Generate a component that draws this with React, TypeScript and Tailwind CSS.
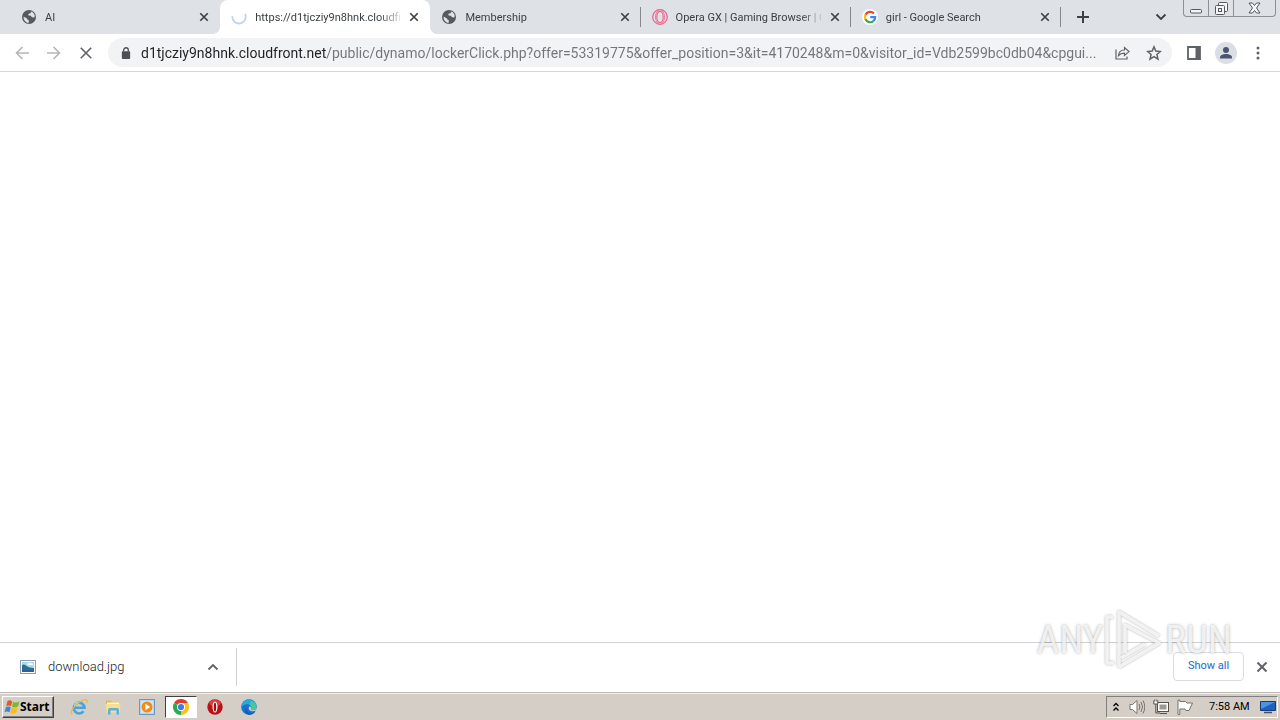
import type { ReactNode } from "react";

const globe = (
  <svg viewBox="0 0 16 16" className="size-4 shrink-0">
    <circle cx="8" cy="8" r="7" fill="#565a60" />
    <path d="M2.600 7.500 6 9.400l.6 1.400 1.300.5-.4 2.900A6 6 0 0 1 2.600 7.500ZM7.200 2.200l3.200.2-.7 1.500-2 .8-.6 1.500 2.700.5 1.200 1.600 2.300.1.500-1.400-.6-2-2-2.200Z" fill="#dee1e6" />
  </svg>
);

const spinner = (
  <svg viewBox="0 0 16 16" className="size-4 shrink-0" fill="none">
    <path d="M1.300 8a6.700 6.700 0 1 0 13-2.500" stroke="#c3d0f2" strokeWidth="1.800" strokeLinecap="round" />
  </svg>
);

const operaGx = (
  <svg viewBox="0 0 16 16" className="size-4 shrink-0" fill="none" stroke="#ef5f88">
    <circle cx="8" cy="8" r="7.300" strokeWidth="1.200" />
    <ellipse cx="8" cy="8" rx="3.200" ry="5.600" strokeWidth="1.100" />
    <path d="M6.500 1.500C2.500 4 2.500 12 6.500 14.500M9.500 1.500c4 2.500 4 10.500 0 13" strokeWidth=".8" />
  </svg>
);

const google = (
  <svg viewBox="0 0 16 16" className="size-4 shrink-0">
    <circle cx="8" cy="8" r="8" fill="#fff" />
    <g fill="none" strokeWidth="2.200">
      <path d="M11.900 4.400A5.200 5.200 0 0 0 3.500 5.700" stroke="#ea4335" />
      <path d="M3.500 5.600a5.200 5.200 0 0 0 0 4.800" stroke="#fbbc05" />
      <path d="M3.500 10.300a5.200 5.200 0 0 0 7.900 1.800" stroke="#34a853" />
      <path d="M8.200 8.100h5a5.200 5.200 0 0 1-1.900 4.100" stroke="#4285f4" />
    </g>
  </svg>
);

function Cross({ className }: { className: string }) {
  return (
    <svg viewBox="0 0 12 12" className={className} fill="none" stroke="currentColor">
      <path d="M1.500 1.500l9 9M10.500 1.500l-9 9" />
    </svg>
  );
}

type TabInfo = { title: string; icon: ReactNode; active?: boolean; line?: boolean };

const tabs: TabInfo[] = [
  { title: "AI", icon: globe },
  { title: "https://d1tjcziy9n8hnk.cloudfront.net", icon: spinner, active: true },
  { title: "Membership", icon: globe, line: true },
  { title: "Opera GX | Gaming Browser | Opera", icon: operaGx, line: true },
  { title: "girl - Google Search", icon: google, line: true },
];

function Tab({ title, icon, active, line }: TabInfo) {
  const shape = active
    ? "relative rounded-t-lg bg-white before:absolute before:bottom-0 before:-left-2 before:size-2 before:bg-[radial-gradient(circle_at_0_0,#dee1e6_8px,#fff_8px)] after:absolute after:bottom-0 after:-right-2 after:size-2 after:bg-[radial-gradient(circle_at_100%_0,#dee1e6_8px,#fff_8px)]"
    : "";
  return (
    <div className={`flex h-full min-w-0 flex-1 items-center pl-[11px] ${shape}`}>
      {icon}
      <button
        role="tab"
        aria-selected={!!active}
        className="ml-2 min-w-0 flex-1 overflow-hidden pt-px text-left text-[11px] leading-4 whitespace-nowrap text-[#3c4043] [mask-image:linear-gradient(to_right,#000_124px,transparent_150px)]"
      >
        {title}
      </button>
      <button aria-label={`Close ${title}`} className="flex w-6 shrink-0 justify-center pl-1 text-[#3c4043]">
        <Cross className="size-2.5 stroke-2" />
      </button>
      <span className={`ml-[5px] h-5 w-px shrink-0 ${line ? "bg-[#85888d]" : ""}`} />
    </div>
  );
}

function ToolButton({ label, children }: { label: string; children: ReactNode }) {
  return (
    <button aria-label={label} className="flex h-8 w-8 shrink-0 items-center justify-center text-[#5f6368]">
      {children}
    </button>
  );
}

function TabStrip() {
  return (
    <header className="flex h-[34px] items-center bg-[#dee1e6] pl-2.5">
      <div role="tablist" className="flex h-full min-w-0 flex-[0_1_1051px]">
        {tabs.map((t) => (
          <Tab key={t.title} {...t} />
        ))}
      </div>
      <button aria-label="New tab" className="flex h-8 w-11 shrink-0 items-center justify-center text-[#3c4043]">
        <svg viewBox="0 0 12 12" className="size-3" stroke="currentColor" strokeWidth="2">
          <path d="M6 0v12M0 6h12" />
        </svg>
      </button>
      <button aria-label="Search tabs" className="mr-2 ml-auto flex h-8 w-7 shrink-0 items-center justify-center text-[#3c4043]">
        <svg viewBox="0 0 12 8" className="h-2 w-3" fill="none" stroke="currentColor" strokeWidth="1.800">
          <path d="M1.500 1.500 6 6l4.500-4.500" />
        </svg>
      </button>
      <div className="mr-1 flex h-[17px] shrink-0 self-start divide-x divide-[#8b8f96] rounded-b border border-t-0 border-[#8b8f96] text-[#55595f]">
        <button aria-label="Minimize" className="flex w-[25px] items-center justify-center">
          <svg viewBox="0 0 12 12" className="mt-1 size-3" fill="#f4f5f7" stroke="currentColor">
            <rect x=".5" y="5.500" width="11" height="3.500" rx="1" />
          </svg>
        </button>
        <button aria-label="Restore" className="flex w-[25px] items-center justify-center">
          <svg viewBox="0 0 13 13" className="size-[13px]" fill="#f4f5f7" stroke="currentColor">
            <rect x="3.500" y=".5" width="9" height="9" rx="1" />
            <rect x=".5" y="3.500" width="9" height="9" rx="1" />
            <rect x="3.500" y="6.500" width="3" height="3" />
          </svg>
        </button>
        <button aria-label="Close" className="flex w-[41px] items-center justify-center">
          <svg viewBox="0 0 13 12" className="h-3 w-[13px]" fill="#f4f5f7" stroke="currentColor">
            <path d="M1 1h3.500l2 2.500L8.500 1H12L8.500 6l3.500 5H8.500l-2-2.500-2 2.500H1l3.500-5Z" />
          </svg>
        </button>
      </div>
    </header>
  );
}

function Toolbar() {
  return (
    <nav className="flex h-[38px] items-center border-b border-[#d5d7da] bg-white px-1.5">
      <ToolButton label="Back">
        <svg viewBox="0 0 14 14" className="size-3.5 text-[#b4b6b9]" fill="none" stroke="currentColor" strokeWidth="1.600">
          <path d="M14 7H1.500M7.500 1 1.500 7l6 6" />
        </svg>
      </ToolButton>
      <ToolButton label="Forward">
        <svg viewBox="0 0 14 14" className="size-3.5 text-[#b4b6b9]" fill="none" stroke="currentColor" strokeWidth="1.600">
          <path d="M0 7h12.500M6.500 1l6 6-6 6" />
        </svg>
      </ToolButton>
      <ToolButton label="Stop loading">
        <Cross className="size-3.5 stroke-[1.4]" />
      </ToolButton>
      <div className="mx-1.5 flex h-[29px] min-w-0 flex-1 items-center rounded-full bg-[#f1f3f4] pr-0.5 pl-[13px]">
        <svg viewBox="0 0 10 13" className="h-3 w-2.5 shrink-0">
          <rect x=".5" y="4.500" width="9" height="8.500" rx="1" fill="#4d5156" />
          <path d="M2.500 5V3.300a2.500 2.500 0 0 1 5 0V5" fill="none" stroke="#4d5156" strokeWidth="1.400" />
        </svg>
        <input
          aria-label="Address"
          readOnly
          className="ml-2.5 min-w-0 flex-1 bg-[linear-gradient(to_right,#202124_186px,#70757a_186px)] bg-clip-text text-sm text-[#5f6368] outline-none [-webkit-text-fill-color:transparent]"
          value="d1tjcziy9n8hnk.cloudfront.net/public/dynamo/lockerClick.php?offer=53319775&offer_position=3&it=4170248&m=0&visitor_id=Vdb2599bc0db04&cpgui..."
        />
        <ToolButton label="Share this page">
          <svg viewBox="0 0 15 14" className="h-3.5 w-[15px]" fill="none" stroke="currentColor" strokeWidth="1.200">
            <path d="M1 3.500V13h11v-2.500M3.500 9.500c.3-3.500 2.200-5.500 6-5.500V1.500L14 5.600 9.500 9.500V7.200c-2.600 0-4.500.5-6 2.300Z" />
          </svg>
        </ToolButton>
        <ToolButton label="Bookmark this tab">
          <svg viewBox="0 0 16 16" className="size-4" fill="none" stroke="currentColor" strokeWidth="1.500">
            <path d="m8 1.800 1.800 4.300 4.600.4-3.500 3 1.100 4.600L8 11.700l-4 2.400 1.100-4.600-3.500-3 4.600-.4Z" />
          </svg>
        </ToolButton>
      </div>
      <ToolButton label="Side panel">
        <svg viewBox="0 0 14 14" className="size-3.5">
          <path d="M1 1h12v12H1Z" fill="none" stroke="currentColor" strokeWidth="1.800" />
          <path d="M8.500 1H13v12H8.500Z" fill="currentColor" />
        </svg>
      </ToolButton>
      <ToolButton label="Profile">
        <svg viewBox="0 0 22 22" className="size-[22px]">
          <circle cx="11" cy="11" r="11" fill="#dbdee4" />
          <circle cx="11" cy="8" r="3" fill="#4b5570" />
          <path d="M5 16.500v-1.200c0-2 3-3.300 6-3.300s6 1.300 6 3.300v1.200Z" fill="#4b5570" />
        </svg>
      </ToolButton>
      <ToolButton label="Menu">
        <svg viewBox="0 0 4 14" className="h-3.5 w-1" fill="currentColor">
          <circle cx="2" cy="2" r="1.500" />
          <circle cx="2" cy="7" r="1.500" />
          <circle cx="2" cy="12" r="1.500" />
        </svg>
      </ToolButton>
    </nav>
  );
}

function DownloadShelf() {
  return (
    <section aria-label="Downloads" className="flex h-[50px] items-center border-t border-[#d0d2d5] bg-white pb-0.5">
      <div className="flex h-[38px] w-[237px] items-center border-r border-[#cfd1d4] pr-[17px] pl-5">
        <svg viewBox="0 0 16 14" className="h-3.5 w-4 shrink-0">
          <rect x=".5" y=".5" width="15" height="13" fill="#fff" stroke="#8b9dae" />
          <path d="M2 2h12v10H2Z" fill="#a9d9f5" />
          <path d="M2 5c3-2 5 2 8 2.500S14 8 14 8v2H2Z" fill="#2c7189" />
          <path d="M2 10h12v2H2Z" fill="#2b5eaa" />
          <path d="M7 4q3-2 6 0v1H8Z" fill="#fff" />
        </svg>
        <a href="#download" className="ml-3 text-[13px] leading-5 font-light text-[#202124]">
          download.jpg
        </a>
        <button aria-label="Download options" className="ml-auto text-[#5f6368]">
          <svg viewBox="0 0 12 8" className="h-2 w-3" fill="none" stroke="currentColor" strokeWidth="1.800">
            <path d="M1.500 6.500 6 2l4.500 4.500" />
          </svg>
        </button>
      </div>
      <button className="ml-auto h-[29px] w-[71px] rounded border border-[#dadce0] text-[11px] text-[#1a67d2]">Show all</button>
      <button aria-label="Close downloads" className="flex h-8 w-9 items-center justify-center text-[#5f6368]">
        <Cross className="size-3 stroke-2" />
      </button>
    </section>
  );
}

function Launch({ label, pressed, children }: { label: string; pressed?: boolean; children: ReactNode }) {
  return (
    <button
      aria-label={label}
      className={`flex h-[22px] w-8 items-center justify-center ${
        pressed ? "border border-t-[#404040] border-r-white border-b-white border-l-[#404040] bg-white" : ""
      }`}
    >
      {children}
    </button>
  );
}

function Taskbar() {
  return (
    <footer className="flex h-7 items-center border-t border-[#bdb9b3] bg-[#d4cec6] px-0.5 pt-px shadow-[inset_0_1px_0_#f3f1ed]">
      <button className="flex h-[22px] w-[52px] items-center border border-t-white border-r-[#404040] border-b-[#404040] border-l-white pl-px font-['Noto_Sans',sans-serif] text-xs font-bold text-black shadow-[inset_-1px_-1px_0_#808080]">
        <svg viewBox="0 0 16 16" className="size-4 shrink-0">
          <path d="M3.500 2Q6 .5 8.200 2.400L7.100 7.300Q4.800 5.800 2.200 7Z" fill="#e8562a" />
          <path d="M9 2.800q2.800 1.400 6.500-.6L14 7.500q-3 1.700-6 .2Z" fill="#7db72f" />
          <path d="M2 8q2.500-1.300 4.800.2l-1.300 5.100Q3.300 11.700.5 13Z" fill="#3a86d8" />
          <path d="M7.700 8.700q2.900 1.400 6 .1l-1.500 5.200q-2.900 1.300-5.800 0Z" fill="#f9bd16" />
        </svg>
        Start
      </button>
      <div className="ml-[9px] flex items-center gap-0.5">
        <Launch label="Internet Explorer">
          <svg viewBox="0 0 18 18" className="size-[18px]" fill="none">
            <path d="M4 9.800h10.500A5.400 5.400 0 1 0 13.500 13.200" stroke="#45a3e2" strokeWidth="2.600" />
            <path d="M4.300 8.500A5 5 0 0 1 9 4.500" stroke="#9adcfa" strokeWidth="1.300" />
            <path d="M2.500 16.500C-1 15.500 3 8.500 9 4.500s9.500-4 7.500.5" stroke="#e6b948" strokeWidth="1.300" />
          </svg>
        </Launch>
        <Launch label="File Explorer">
          <svg viewBox="0 0 18 18" className="size-[18px]">
            <path d="M2 2.500h5l1 1.500h7v10H2Z" fill="#dcbb5c" />
            <path d="M3 4.500h12v2H3Z" fill="#fff8d8" />
            <path d="M1.500 6h15L15.500 14.500h-13Z" fill="#f5df92" />
            <path d="M4 16.500V12q0-2 2-2h7q2 0 2 2v4.500h-2.500v-4h-6v4Z" fill="#5bb0dd" />
          </svg>
        </Launch>
        <Launch label="Media Player">
          <svg viewBox="0 0 16 16" className="size-4">
            <rect x=".5" y=".5" width="15" height="15" fill="#b9d5ed" stroke="#6a98c5" />
            <path d="M2 2h12v12H2Z" fill="#d3e5f5" />
            <circle cx="8" cy="8" r="5.500" fill="#f18a16" />
            <path d="m6.300 4.800 5 3.200-5 3.200Z" fill="#fff" />
          </svg>
        </Launch>
        <Launch label="Chrome" pressed>
          <svg viewBox="0 0 16 16" className="size-4">
            <path d="M8 8 1.070 4A8 8 0 0 1 14.930 4Z" fill="#e33b2e" />
            <path d="M8 8 14.930 4A8 8 0 0 1 8 16Z" fill="#fbc116" />
            <path d="M8 8v8A8 8 0 0 1 1.070 4Z" fill="#2da94f" />
            <path d="M8 4h6.930a8 8 0 0 1 .8 2H8Z" fill="#fbc116" />
            <circle cx="8" cy="8" r="4" fill="#fff" />
            <circle cx="8" cy="8" r="3.100" fill="#3b7de9" />
          </svg>
        </Launch>
        <Launch label="Opera">
          <svg viewBox="0 0 16 16" className="size-4">
            <circle cx="8" cy="8" r="7.700" fill="#b81218" />
            <ellipse cx="8" cy="4.200" rx="5.500" ry="3.300" fill="#d8423f" />
            <ellipse cx="8" cy="8" rx="2.500" ry="5.500" fill="#fff" />
            <ellipse cx="8" cy="8" rx="1.200" ry="4.500" fill="#a30c12" />
          </svg>
        </Launch>
        <Launch label="Edge">
          <svg viewBox="0 0 16 16" className="size-4">
            <circle cx="8" cy="8" r="7.800" fill="#1873d0" />
            <path d="M.3 8A7.800 7.800 0 0 1 15.800 8c0 2.500-2 3.700-4.500 3.400-1.300-.2-1.600-.9-1.100-1.800C11 7.500 9 5 6 5 3.500 5 1.300 6 .3 8Z" fill="#45c9a0" />
            <path d="M.3 8A7.800 7.800 0 0 1 9 .3c2 .3 1.500 3-1 4.900C5 4.300 2 5.300.3 8Z" fill="#27a9e0" />
            <path d="M5.700 7.500c-1.200 3 .6 6 4.300 6.400 2 .2 3.300-.4 4.300-1.200C12.500 15 10 16 7.700 15.800 4 14.500 3.200 10 5.700 7.500Z" fill="#155bb0" />
            <path d="M8.300 7.500C7 9.300 8 11.700 11 12.200q2.500.3 5-1.200V9.500q-1.500 1.900-4.500 1.700-2.100-.3-1.300-1.800.3-1.900-1.900-1.900Z" fill="#d4cec6" />
          </svg>
        </Launch>
      </div>
      <div className="ml-auto flex h-[22px] w-[172px] items-center border border-t-[#808080] border-r-white border-b-white border-l-[#808080] pr-px pl-1.5">
        <button aria-label="Show hidden icons">
          <svg viewBox="0 0 6 10" className="h-2.5 w-1.5" fill="none" stroke="#000" strokeWidth="1.300">
            <path d="M.5 4 3 1.500 5.500 4M.5 8.500 3 6l2.500 2.500" />
          </svg>
        </button>
        <svg viewBox="0 0 16 16" className="ml-2.5 size-4" fill="#fff" stroke="#77736d">
          <path d="M1 5.500h2.500L8 1.500v13l-4.500-4H1Z" />
          <path d="M10 5q1.800 3 0 6M12 3q3 5 0 10M14 1.500q3.500 6.500 0 13" fill="none" />
        </svg>
        <svg viewBox="0 0 16 16" className="ml-2 size-4" fill="#fff" stroke="#55524d">
          <rect x="4.500" y="3.500" width="11" height="9" />
          <rect x="6.500" y="5.500" width="7" height="5" fill="#9c9993" stroke="none" />
          <path d="M7 14.500h7" />
          <path d="M2.800 5v9H7" fill="none" />
          <path d="M.8 1.500v3.500h4V1.500M1.800.5v2M3.800.5v2" />
        </svg>
        <svg viewBox="0 0 16 16" className="ml-2 size-4" fill="#fff" stroke="#77736d">
          <path d="M1 1v14.500h1.800V10H8l1 1.500h3L15.500 4H10L8.500 2.500H2.800V1Z" />
        </svg>
        <time className="ml-4 text-[11px] whitespace-nowrap text-black">7:58 AM</time>
        <button aria-label="Show desktop" className="ml-auto">
          <svg viewBox="0 0 16 14" className="h-3.5 w-4">
            <path d="M.5 1.500h15v9H.5Z" fill="#1d62bd" stroke="#193b75" />
            <path d="M1 2h14L1 9Z" fill="#4e94df" />
            <path d="M4 12.500h8" stroke="#43516a" strokeWidth="1.500" />
          </svg>
        </button>
      </div>
    </footer>
  );
}

function Watermark() {
  return (
    <div className="pointer-events-none absolute right-12 bottom-12 flex h-16 items-center text-[39px] leading-none text-white/80 antialiased [font-family:'Roboto_Condensed','Liberation_Sans_Narrow',sans-serif] [text-shadow:0_0_2px_#0004,0_0_4px_#0002]">
      <span>ANY</span>
      <svg viewBox="0 0 60 62" className="h-[62px] w-[60px] drop-shadow-[0_0_1px_#0006]" fill="none" stroke="#fffc" strokeWidth="3.500" strokeLinejoin="round">
        <path d="M10 8H4v46h7M16 58V3l40 24M22 44V16l34 18-40 24M18 49l24-14" />
      </svg>
      <span className="ml-0.5">RUN</span>
    </div>
  );
}

export default function App() {
  return (
    <div className="relative flex min-h-screen flex-col bg-white font-[Roboto,sans-serif]">
      <TabStrip />
      <Toolbar />
      <main className="flex-1 bg-white" />
      <DownloadShelf />
      <Taskbar />
      <Watermark />
    </div>
  );
}
